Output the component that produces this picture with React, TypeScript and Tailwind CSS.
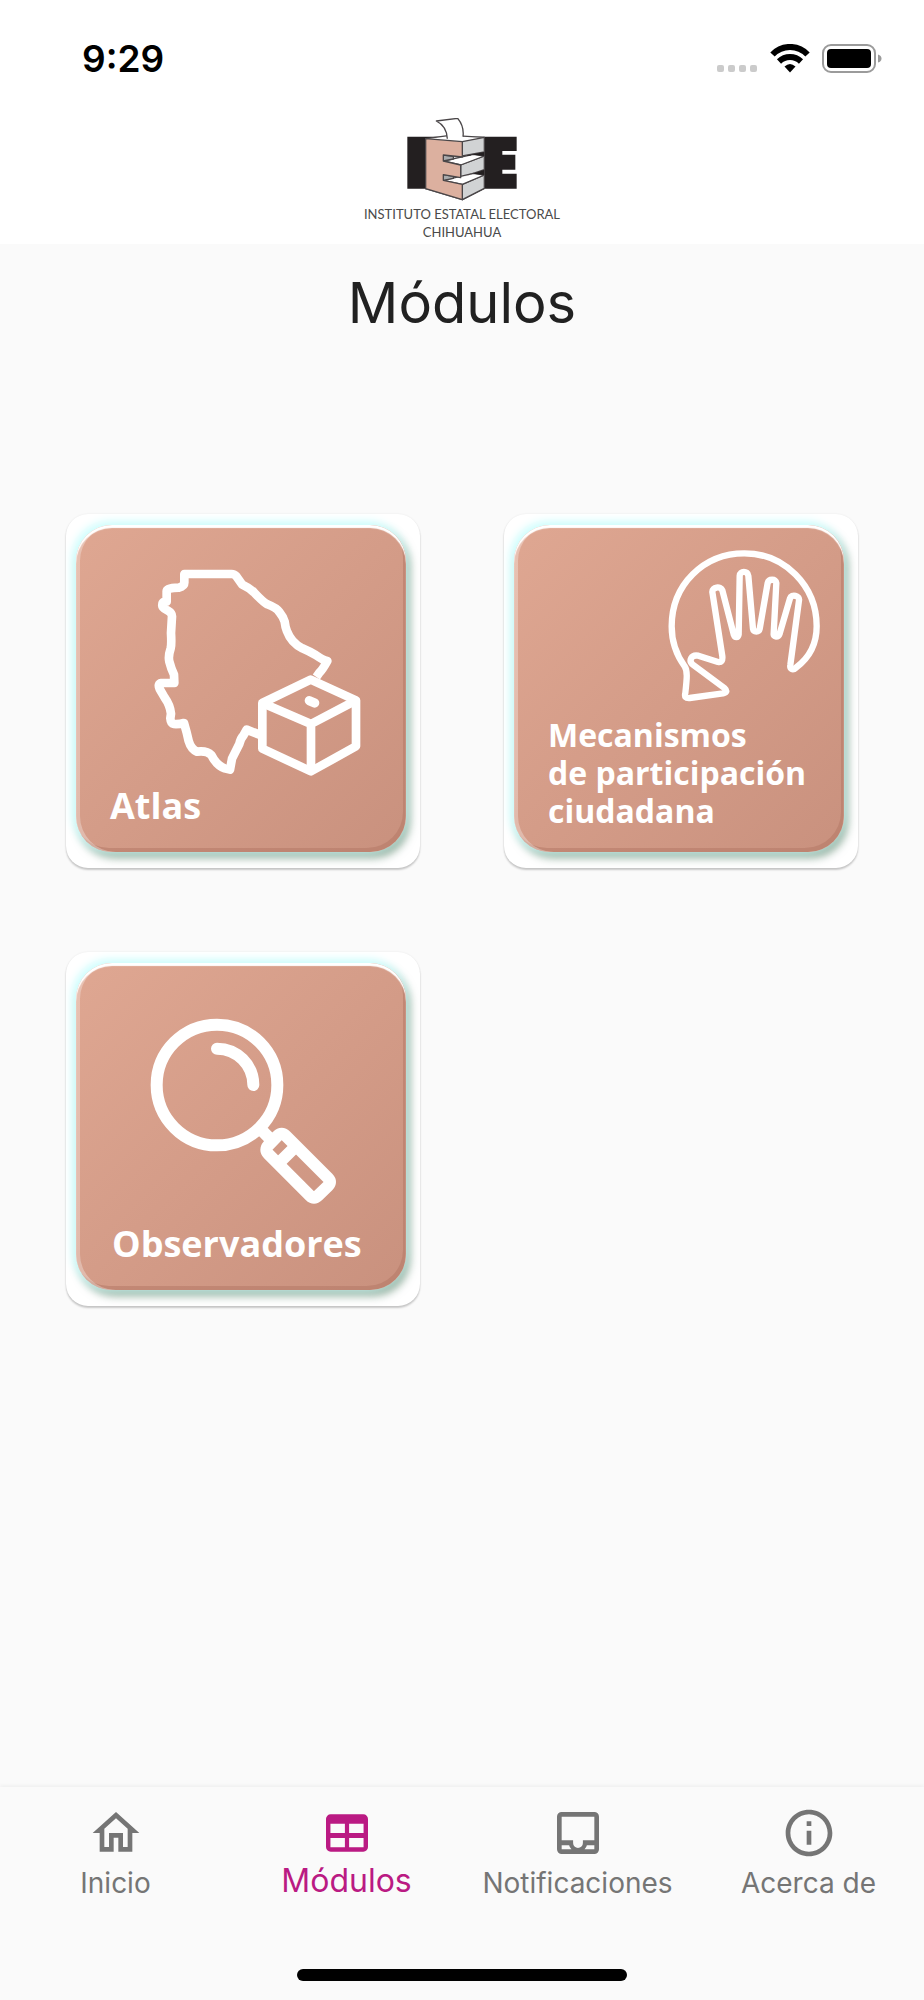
import type { ReactNode } from "react";

interface Module {
  id: string;
  label: string;
  textClass: string;
  art: ReactNode;
}

const modules: Module[] = [
  {
    id: "atlas",
    label: "Atlas",
    textClass: "pl-[34px] text-4xl leading-[48px]",
    art: (
      <svg viewBox="78 76 990 984" className="w-full [grid-area:1/1]" fill="none" stroke="#fff" strokeWidth="26" strokeLinejoin="round" strokeLinecap="butt">
        <path d="M799 532L808 519Q818 510 832 484Q820 482 797 466Q780 456 757 446Q724 430 711 395Q706 383 704 366Q700 352 688 337Q680 325 652 314Q640 308 612 278Q600 266 577 255L560 231Q553 223 545 223H403V247Q404 260 386 264Q350 264 350 275V306Q337 304 337 315Q335 324 352 332Q366 340 366 350L363 400Q365 435 362 446Q354 470 358 486Q363 506 372 525L373 550H334Q322 552 329 568L344 594Q360 616 363 642L361 656Q362 672 371 673Q388 674 402 670Q411 700 416 724Q423 748 441 756Q470 752 484 766Q500 798 524 806L540 810L546 777L568 733Q572 716 580 708L590 690L634 707" />
        <path d="M782 540L637 610V747L783 815L918 740V602Z" />
        <path d="M637 610L783 673L918 602M783 673V815" />
        <path d="M778 603L794 610" strokeWidth="28" strokeLinecap="round" />
      </svg>
    )
  },
  {
    id: "mecanismos",
    label: "Mecanismos\nde participación\nciudadana",
    textClass: "pl-[34px] text-[32px] leading-[38px]",
    art: (
      <svg viewBox="73 76 990 984" className="w-full [grid-area:1/1]" fill="none" stroke="#fff" strokeWidth="19" strokeLinejoin="round" strokeLinecap="round">
        <path d="M585 500C560 466 546 426 546 380C546 255 642 161 764 161C884 161 981 258 981 380C981 430 960 474 919 504C909 514 900 508 902 496L928 302C931 288 905 282 901 296L870 402C866 414 850 413 852 402L860 250C859 237 837 237 834 250L810 388C808 398 792 398 790 388L776 228C775 213 750 213 750 228L747 404C745 415 736 415 732 404L698 272C693 258 667 262 668 277L698 470Q700 490 685 487L626 468C604 464 596 484 610 495L705 566Q717 577 700 581L600 595C588 596 584 592 587 580C592 535 594 514 585 500Z" />
      </svg>
    )
  },
  {
    id: "observadores",
    label: "Observadores",
    textClass: "pl-9 text-4xl leading-[48px]",
    art: (
      <svg viewBox="78 70 990 984" className="w-full [grid-area:1/1]" fill="none" stroke="#fff" strokeWidth="36" strokeLinejoin="round" strokeLinecap="round">
        <circle cx="501" cy="436" r="181" />
        <path d="M501 327A109 109 0 0 1 610 436" />
        <path d="M635 572L660 597" strokeLinecap="butt" />
        <path d="M682 589Q695 576 708 589L834 715Q846 727 834 739L804 768Q792 780 780 768L655 643Q643 630 655 617Z" />
        <path d="M695 662L730 627" />
      </svg>
    )
  }
];

const tabs = [
  {
    label: "Inicio",
    active: false,
    icon: <path d="M12 5.69l5 4.5V18h-2v-6H9v6H7v-7.81l5-4.5M12 3L2 12h3v8h6v-6h2v6h6v-8h3L12 3z" />
  },
  {
    label: "Módulos",
    active: true,
    icon: (
      <path
        fillRule="evenodd"
        d="M5 4h14a2 2 0 0 1 2 2v12a2 2 0 0 1-2 2H5a2 2 0 0 1-2-2V6a2 2 0 0 1 2-2zM4.900 8v4h6.200V8zM12.900 8v4h6.200V8zM4.900 14.100v4h6.200v-4zM12.900 14.100v4h6.200v-4z"
      />
    )
  },
  {
    label: "Notificaciones",
    active: false,
    icon: (
      <path
        fillRule="evenodd"
        d="M5 3h14a2 2 0 0 1 2 2v14a2 2 0 0 1-2 2H5a2 2 0 0 1-2-2V5a2 2 0 0 1 2-2zM5 5v10.100h4.900v1.200a2.100 2.100 0 0 0 4.200 0v-1.200H19V5zM5 17.200V19h4.200q-.8-.8-1-1.800zM19 17.200V19h-4.200q.8-.8 1-1.800z"
      />
    )
  },
  {
    label: "Acerca de",
    active: false,
    icon: <path d="M11 7h2v2h-2zm0 4h2v6h-2zm1-9C6.480 2 2 6.480 2 12s4.480 10 10 10 10-4.480 10-10S17.520 2 12 2zm0 18c-4.410 0-8-3.590-8-8s3.590-8 8-8 8 3.590 8 8-3.590 8-8 8z" />
  }
];

function StatusBar() {
  return (
    <div className="flex h-[118px] items-center justify-between pr-[42px] pl-[82px]">
      <time className="text-[37px] leading-10 font-semibold text-black">9:29</time>
      <svg width="166" height="30" viewBox="0 0 166 30" aria-hidden="true">
        <g fill="#cbcbcb">
          <rect x="1" y="21" width="7" height="7" rx="2" />
          <rect x="12" y="21" width="7" height="7" rx="2" />
          <rect x="23" y="21" width="7" height="7" rx="2" />
          <rect x="34" y="21" width="7" height="7" rx="2" />
        </g>
        <g fill="none" stroke="#000" strokeWidth="6">
          <path d="M56.500 10.500A24 24 0 0 1 91.500 10.500" />
          <path d="M63 17.500A16 16 0 0 1 85 17.500" />
        </g>
        <path d="M68.500 22.500Q74 17.500 79.500 22.500L74 28.500Z" />
        <rect x="107" y="1" width="52" height="27" rx="8" fill="#fff" stroke="#9b9b9b" strokeWidth="2" />
        <rect x="111" y="5" width="44" height="19" rx="4" />
        <path d="M162 10.500q3.500 1 3.500 4t-3.500 4z" fill="#9b9b9b" />
      </svg>
    </div>
  );
}

function Logo() {
  return (
    <div className="flex flex-col items-center">
      <svg width="110" height="84" viewBox="201 39 330 252" aria-hidden="true">
        <path d="M202 95H530V138H487V149H526V194H487V206H530V251H202Z" fill="#231f20" />
        <g stroke="#4a4648" strokeWidth="4" strokeLinejoin="round">
          <path d="M257 101L330 91L433 97V250L367 284L257 251Z" fill="#fff" />
          <path d="M367 110L433 97V141L367 153ZM362 180L433 153V194L362 218ZM367 238L433 210V250L367 284Z" fill="#d1d3d4" />
          <path d="M310 168L400 148L433 153L362 180ZM310 226L400 205L433 210L367 238Z" fill="#fff" />
          <path d="M310 150L340 154V162L310 168ZM310 209L340 214V220L310 226Z" fill="#a9abad" />
          <path d="M372 153L433 141V153L400 149ZM372 215L433 194V210L400 206Z" fill="#231f20" stroke="none" />
          <path d="M257 101L367 110V156L310 150V168L362 180V218L310 209V226L367 238V284L257 251Z" fill="#dcb09f" />
          <path d="M322 101Q320 63 289 48L353 40Q373 64 369 95" fill="#fff" />
        </g>
      </svg>
      <p className="mt-[3px] text-center font-[Lato] text-[13px] leading-[18px] text-[#4a4a4a]">
        INSTITUTO ESTATAL ELECTORAL
        <br />
        CHIHUAHUA
      </p>
    </div>
  );
}

function ModuleCard({ module }: { module: Module }) {
  return (
    <button className="aspect-square w-full rounded-[22px] bg-white pt-[11px] pr-[14px] pb-4 pl-[10px] text-left shadow-[0_2px_2px_rgba(0,0,0,0.2),0_0_2px_rgba(0,0,0,0.08)]">
      <span className="grid h-full rounded-[36px] bg-linear-to-br from-[#dfa792] to-[#c9917e] shadow-[inset_0_3px_1px_#fff,inset_4px_0_0_rgba(255,255,255,0.3),inset_-3px_-4px_0_rgba(180,120,102,0.55),-2px_-2px_8px_2px_#d0ffff,3px_5px_9px_1px_rgba(88,130,104,0.65)]">
        {module.art}
        <span className={`self-end pb-[22px] font-['Open_Sans'] font-bold whitespace-pre-line text-white [grid-area:1/1] ${module.textClass}`}>
          {module.label}
        </span>
      </span>
    </button>
  );
}

export default function App() {
  return (
    <div className="flex min-h-screen flex-col bg-[#fafafa] font-[Inter,sans-serif]">
      <header className="bg-white pb-[3px]">
        <StatusBar />
        <Logo />
      </header>
      <main className="flex-1">
        <h1 className="pt-[23px] text-center text-[56px] leading-[72px] font-normal text-[#212121]">Módulos</h1>
        <div className="grid grid-cols-2 gap-[84px] px-[66px] pt-[175px]">
          {modules.map((module) => (
            <ModuleCard key={module.id} module={module} />
          ))}
        </div>
      </main>
      <nav className="bg-[#fafafa] shadow-[0_-2px_3px_rgba(0,0,0,0.04)]">
        <div className="grid h-[182px] grid-cols-4 items-start pt-[18px]">
          {tabs.map((tab) => (
            <button
              key={tab.label}
              aria-current={tab.active ? "page" : undefined}
              className={`flex flex-col items-center whitespace-nowrap ${
                tab.active ? "text-[32px] leading-10 text-[#ba1a83]" : "text-[28px] leading-11 text-[#757575]"
              }`}
            >
              <svg width="56" height="56" viewBox="0 0 24 24" fill="currentColor" aria-hidden="true">
                {tab.icon}
              </svg>
              <span>{tab.label}</span>
            </button>
          ))}
        </div>
        <div className="mx-auto mb-[19px] h-3 w-[330px] rounded-full bg-black" />
      </nav>
    </div>
  );
}
